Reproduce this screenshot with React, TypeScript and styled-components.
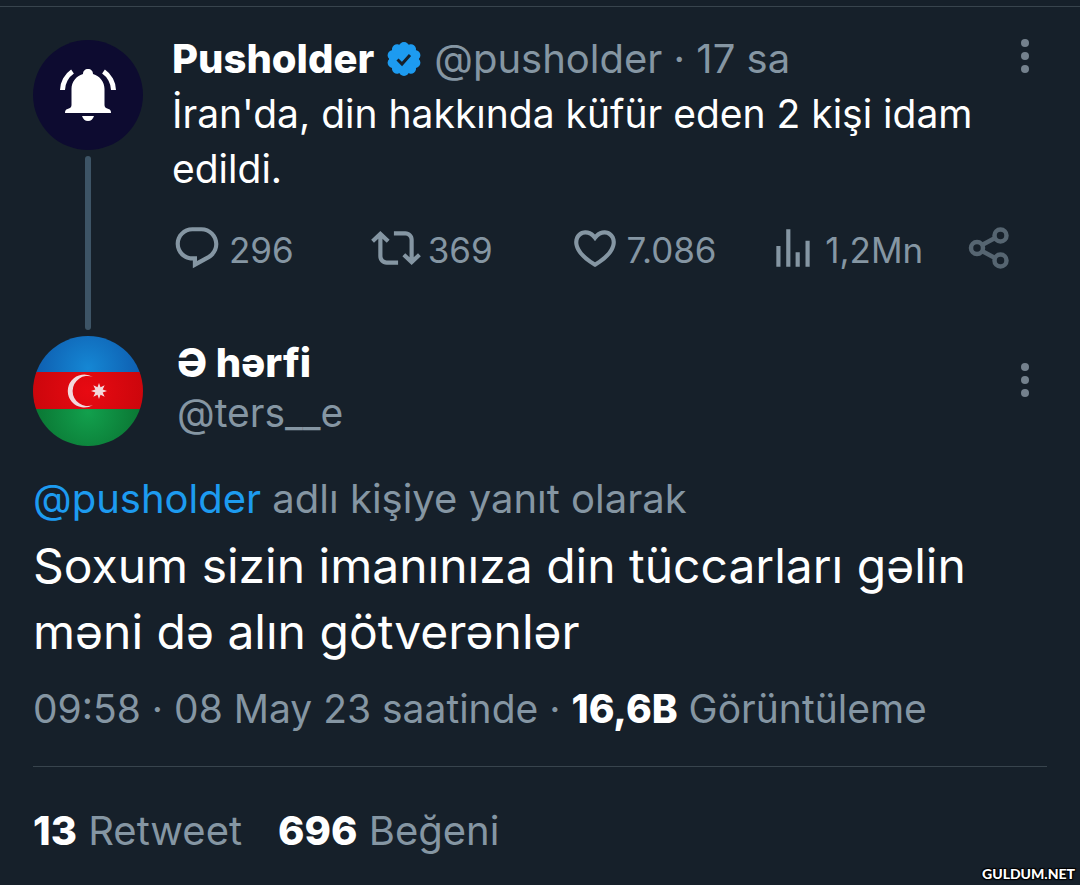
import React from "react";
import styled, { createGlobalStyle } from "styled-components";

const GlobalStyle = createGlobalStyle`
  * { box-sizing: border-box; }
  body { margin: 0; background: #16202a; color: #fff; font-family: Inter, "Liberation Sans", sans-serif; }
`;

const Page = styled.main`
  position: relative;
  min-height: 100vh;
  padding: 6px 0 12px;
`;
const Sheet = styled.div`
  border-top: 1px solid #38444d;
  padding: 24px 33px 0;
`;
const Post = styled.article`
  display: flex;
  gap: 29px;
`;
const Rail = styled.div`
  display: flex;
  flex-direction: column;
  align-items: center;
  gap: 6px;
  padding: 9px 0 6px;
  flex: none;
`;
const Avatar = styled.svg`
  display: block;
  flex: none;
  width: 110px;
  height: 110px;
`;
const ThreadLine = styled.div`
  flex: 1;
  width: 6px;
  border-radius: 3px;
  background: #3d5466;
`;
const Content = styled.div`
  flex: 1;
  min-width: 0;
  padding-bottom: 60px;
`;
const Head = styled.header`
  display: flex;
  align-items: flex-start;
  justify-content: space-between;
`;
const Byline = styled.div`
  display: flex;
  align-items: center;
  gap: 11px;
  font-size: 40px;
  line-height: 55px;
  white-space: nowrap;
`;
const Name = styled.strong`
  font-weight: 800;
  font-size: 40px;
`;
const Muted = styled.span`
  color: #8596a3;
`;
const MoreButton = styled.button`
  display: block;
  flex: none;
  border: 0;
  padding: 0;
  background: none;
  color: #74818d;
  width: 44px;
  height: 50px;
  svg { display: block; width: 44px; height: 50px; }
`;
const Body = styled.p`
  margin: 0;
  font-size: 39px;
  line-height: 55px;
`;
const Actions = styled.div`
  display: grid;
  grid-template-columns: repeat(4, 1fr) 44px;
  align-items: center;
  height: 56px;
  margin-top: 24px;
  padding-right: 36px;
`;
const Action = styled.button<{ $dim?: boolean }>`
  display: flex;
  align-items: center;
  gap: 7px;
  border: 0;
  padding: 0;
  background: none;
  color: ${(p) => (p.$dim ? "#566571" : "#8596a3")};
  font: inherit;
  font-size: 35px;
  white-space: nowrap;
  svg { flex: none; width: 50px; height: 50px; }
`;
const Count = styled.span`
  padding-top: 3px;
`;
const Author = styled.div`
  display: flex;
  gap: 34px;
`;
const AuthorRow = styled(Head)`
  flex: 1;
  padding-top: 2px;
  ${MoreButton} { margin-top: 17px; }
`;
const AuthorNames = styled.div`
  font-size: 39px;
  line-height: 50px;
  display: flex;
  flex-direction: column;
`;
const ReplyTo = styled.p`
  margin: 25px 0 0;
  font-size: 40px;
  line-height: 56px;
`;
const Mention = styled.a`
  color: #1d9bf0;
  text-decoration: none;
`;
const Lead = styled.p`
  margin: 6px 0 0;
  font-size: 48px;
  line-height: 66px;
`;
const Meta = styled.p`
  margin: 16px 0 0;
  font-size: 39px;
  line-height: 56px;
`;
const Strong = styled.strong`
  color: #fff;
  font-weight: 800;
`;
const Stats = styled.div`
  display: flex;
  gap: 36px;
  margin-top: 29px;
  padding-top: 36px;
  border-top: 1px solid #38444d;
  font-size: 40px;
  line-height: 56px;
`;
const Watermark = styled.small`
  position: absolute;
  right: 5px;
  bottom: 2px;
  font: 900 14px/18px Lato, sans-serif;
  color: #fff;
  text-shadow: 1px 1px 1px #000, -1px -1px 1px #000, 1px -1px 1px #000, -1px 1px 1px #000;
`;

const Glyph = ({ d }: { d: string }) => (
  <svg viewBox="0 0 24 24" fill="currentColor" aria-hidden="true"><path d={d} /></svg>
);
const REPLY = "M1.751 10c0-4.42 3.584-8 8.005-8h4.366c4.49 0 8.129 3.64 8.129 8.13 0 2.96-1.607 5.68-4.196 7.11l-8.054 4.46v-3.69h-.067c-4.49.1-8.183-3.51-8.183-8.01zm8.005-6c-3.317 0-6.005 2.69-6.005 6 0 3.37 2.77 6.08 6.138 6.01l.351-.01h1.761v2.3l5.087-2.81c1.951-1.08 3.163-3.13 3.163-5.36 0-3.39-2.744-6.13-6.129-6.13H9.756z";
const RETWEET = "M4.5 3.88l4.432 4.14-1.364 1.46L5.5 7.55V16c0 1.1.896 2 2 2H13v2H7.5c-2.209 0-4-1.79-4-4V7.55L1.432 9.48.068 8.02 4.5 3.88zM16.5 6H11V4h5.5c2.209 0 4 1.79 4 4v8.45l2.068-1.93 1.364 1.46-4.432 4.14-4.432-4.14 1.364-1.46 2.068 1.93V8c0-1.1-.896-2-2-2z";
const LIKE = "M16.697 5.5c-1.222-.06-2.679.51-3.89 2.16l-.805 1.09-.806-1.09C9.984 6.01 8.526 5.44 7.304 5.5c-1.243.07-2.349.78-2.91 1.91-.552 1.12-.633 2.78.479 4.82 1.074 1.97 3.257 4.27 7.129 6.61 3.87-2.34 6.052-4.64 7.126-6.61 1.111-2.04 1.03-3.7.477-4.82-.561-1.13-1.666-1.84-2.908-1.91zm4.187 7.69c-1.351 2.48-4.001 5.12-8.379 7.67l-.503.3-.504-.3c-4.379-2.55-7.029-5.19-8.382-7.67-1.36-2.5-1.41-4.86-.514-6.67.887-1.79 2.647-2.91 4.601-3.01 1.651-.09 3.368.56 4.798 2.01 1.429-1.45 3.146-2.1 4.796-2.01 1.954.1 3.714 1.22 4.601 3.01.896 1.81.846 4.17-.514 6.67z";
const VIEWS = "M8.75 21V3h2v18h-2zM18 21V8.5h2V21h-2zM4 21l.004-10h2L6 21H4zm9.248 0v-7h2v7h-2z";

const More = () => (
  <MoreButton aria-label="Daha fazla">
    <svg viewBox="0 0 44 50" fill="currentColor" aria-hidden="true">
      <circle cx="22" cy="12" r="4" /><circle cx="22" cy="25" r="4" /><circle cx="22" cy="38" r="4" />
    </svg>
  </MoreButton>
);

const VerifiedSvg = styled.svg`
  flex: none;
  width: 38px;
  height: 38px;
`;
const Verified = () => (
  <VerifiedSvg viewBox="0 0 38 38" role="img" aria-label="Onaylanmış hesap">
    <g fill="#1d9bf0">
      <circle cx="19" cy="19" r="15" />
      {Array.from({ length: 10 }, (_, i) => (
        <circle key={i} cx="19" cy="7" r="5" transform={`rotate(${i * 36} 19 19)`} />
      ))}
    </g>
    <path d="M12.500 19.500l4.500 4.500 8-9" fill="none" stroke="#16202a" strokeWidth="3" />
  </VerifiedSvg>
);

const BellAvatar = () => (
  <Avatar viewBox="0 0 110 110" role="img" aria-label="Pusholder">
    <circle cx="55" cy="55" r="55" fill="#0d0b30" />
    <path fill="#fff" d="M55 29c-3 0-5 2-5 5-7 2-11.500 8-11.500 15v16c0 2-1 3-4 4-2 .500-2.500 2-2.500 4h46c0-2-.500-3.500-2.500-4-3-1-4-2-4-4V49c0-7-4.500-13-11.500-15 0-3-2-5-5-5z" />
    <path fill="#fff" d="M49 76h12c-1 3-3 5-6 5s-5-2-6-5z" />
    <path d="M29.500 50c0-7 4-14.500 10-18.500M80.500 50c0-7-4-14.500-10-18.500" fill="none" stroke="#fff" strokeWidth="5" />
  </Avatar>
);

const star = Array.from({ length: 16 }, (_, i) => {
  const r = i % 2 ? 4 : 8;
  const a = (i * Math.PI) / 8;
  return `${66 + r * Math.sin(a)},${55 - r * Math.cos(a)}`;
}).join(" ");

const FlagAvatar = () => (
  <Avatar viewBox="0 0 110 110" role="img" aria-label="Ə hərfi">
    <defs>
      <clipPath id="round"><circle cx="55" cy="55" r="55" /></clipPath>
      <radialGradient id="blue" gradientUnits="userSpaceOnUse" cx="55" cy="32" r="56"><stop offset="0" stopColor="#1587d4" /><stop offset="1" stopColor="#0e5cae" /></radialGradient>
      <radialGradient id="red" gradientUnits="userSpaceOnUse" cx="55" cy="55" r="56"><stop offset="0" stopColor="#e80a12" /><stop offset="1" stopColor="#cc060c" /></radialGradient>
      <radialGradient id="green" gradientUnits="userSpaceOnUse" cx="55" cy="76" r="56"><stop offset="0" stopColor="#12a04d" /><stop offset="1" stopColor="#0a7432" /></radialGradient>
    </defs>
    <g clipPath="url(#round)">
      <path fill="url(#blue)" d="M0 0h110v37H0z" />
      <path fill="url(#red)" d="M0 36h110v37H0z" />
      <path fill="url(#green)" d="M0 73h110v37H0z" />
      <path fill="#f3d9dc" d="M60 41a16.500 16.500 0 1 0 0 28a15 15 0 1 1 0-28z" />
      <polygon fill="#f3d9dc" points={star} />
    </g>
  </Avatar>
);

export default function App() {
  return (
    <>
      <GlobalStyle />
      <Page>
        <Sheet>
          <Post>
            <Rail><BellAvatar /><ThreadLine /></Rail>
            <Content>
              <Head>
                <Byline>
                  <Name>Pusholder</Name>
                  <Verified />
                  <Muted>@pusholder · 17 sa</Muted>
                </Byline>
                <More />
              </Head>
              <Body>İran'da, din hakkında küfür eden 2 kişi idam edildi.</Body>
              <Actions>
                <Action aria-label="Yanıtla"><Glyph d={REPLY} /><Count>296</Count></Action>
                <Action aria-label="Retweetle"><Glyph d={RETWEET} /><Count>369</Count></Action>
                <Action aria-label="Beğen"><Glyph d={LIKE} /><Count>7.086</Count></Action>
                <Action aria-label="Görüntülenme"><Glyph d={VIEWS} /><Count>1,2Mn</Count></Action>
                <Action $dim aria-label="Paylaş">
                  <svg viewBox="0 0 50 50" fill="none" stroke="currentColor" strokeWidth="4.500" aria-hidden="true">
                    <circle cx="10" cy="25" r="6" /><circle cx="33.500" cy="12.500" r="6" /><circle cx="33.500" cy="37.500" r="6" />
                    <path d="M15 22l13-7M15 28l13 7" />
                  </svg>
                </Action>
              </Actions>
            </Content>
          </Post>
          <article>
            <Author>
              <FlagAvatar />
              <AuthorRow>
                <AuthorNames><Name>Ə hərfi</Name><Muted>@ters__e</Muted></AuthorNames>
                <More />
              </AuthorRow>
            </Author>
            <ReplyTo><Mention href="#pusholder">@pusholder</Mention> <Muted>adlı kişiye yanıt olarak</Muted></ReplyTo>
            <Lead>Soxum sizin imanınıza din tüccarları gəlin məni də alın götverənlər</Lead>
            <Meta><Muted>09:58 · 08 May 23 saatinde · <Strong>16,6B</Strong> Görüntüleme</Muted></Meta>
            <Stats>
              <Muted><Strong>13</Strong> Retweet</Muted>
              <Muted><Strong>696</Strong> Beğeni</Muted>
            </Stats>
          </article>
        </Sheet>
        <Watermark>GULDUM.NET</Watermark>
      </Page>
    </>
  );
}
